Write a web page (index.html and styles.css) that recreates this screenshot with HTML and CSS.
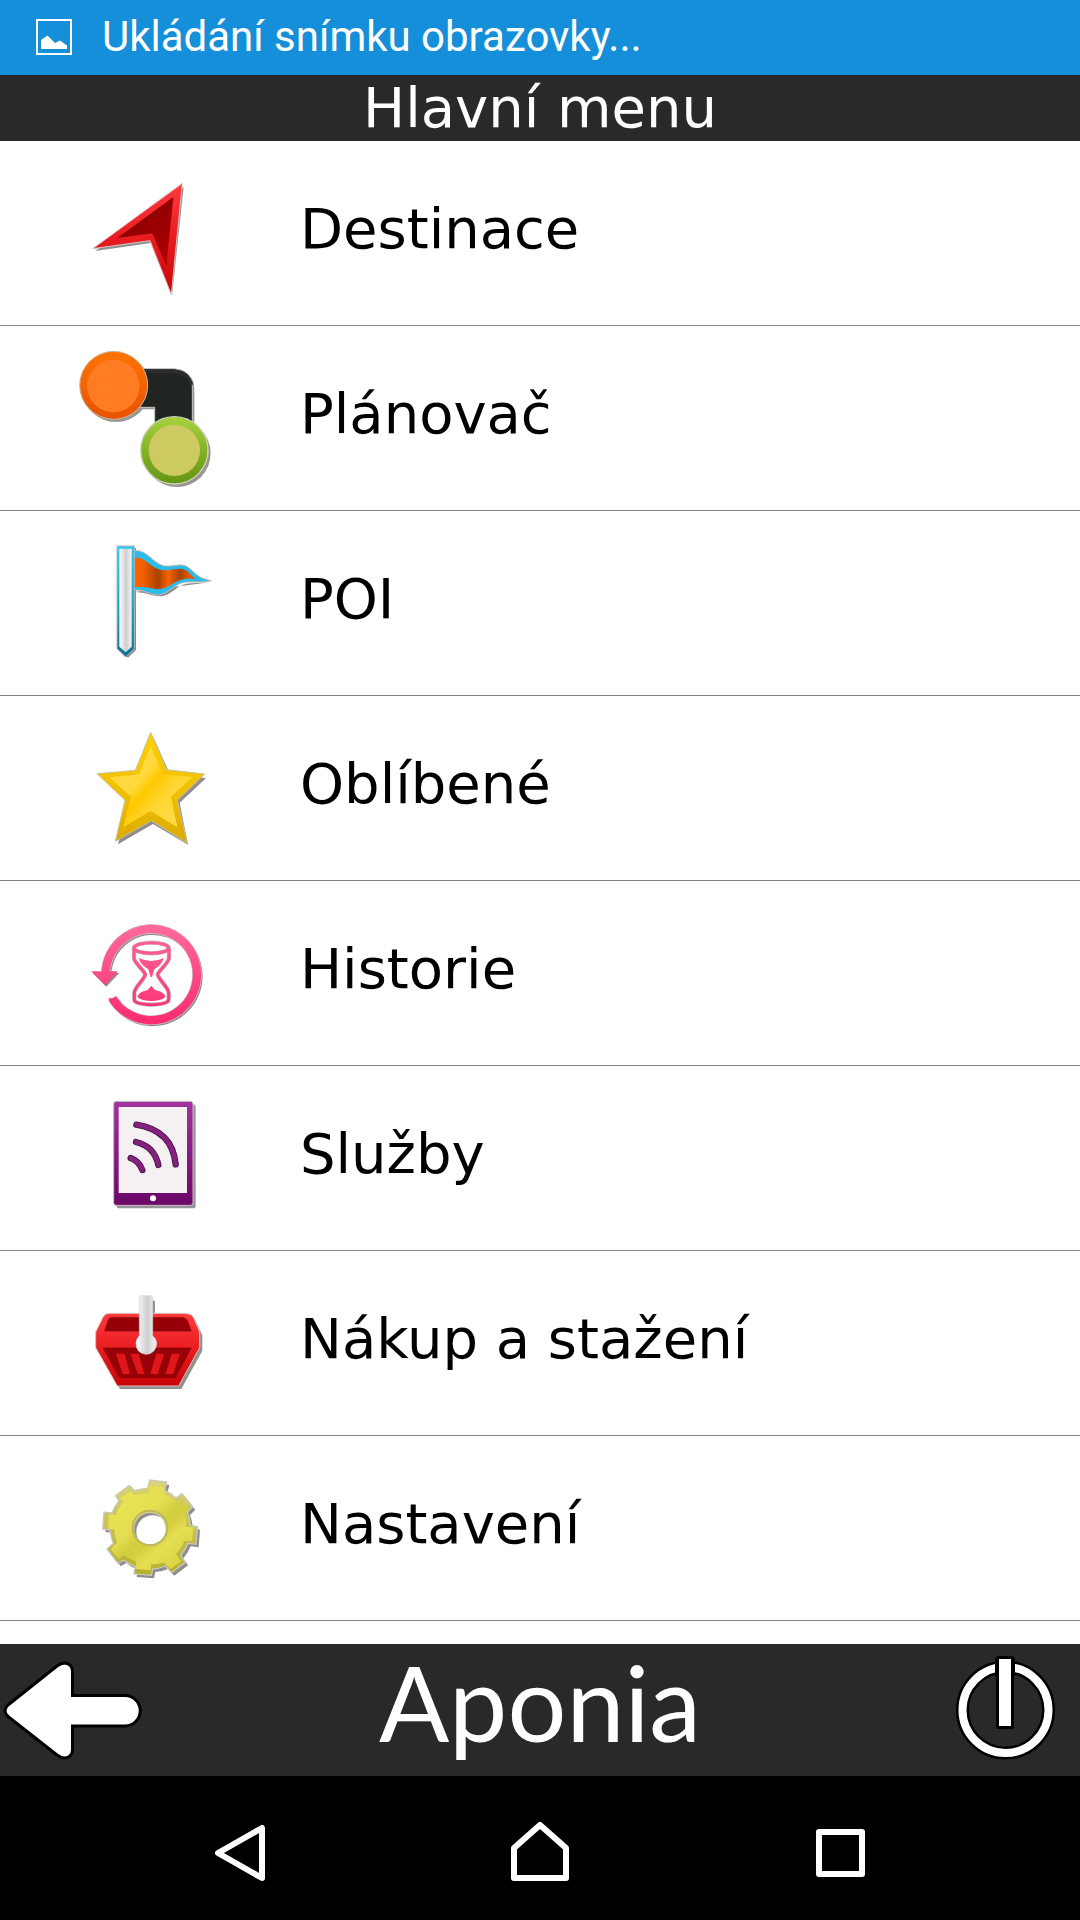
FILE: index.html
```html
<!DOCTYPE html>
<html lang="cs">
<head>
    <meta charset="UTF-8">
    <meta name="viewport" content="width=device-width, initial-scale=1">
    <title>Hlavní menu</title>
    <link rel="stylesheet" href="styles.css">
</head>
<body>
    <div class="status-bar">
        <svg class="status-icon" viewBox="0 0 36 36" aria-hidden="true">
            <rect x="1" y="1" width="34" height="34" fill="none" stroke="#fff" stroke-width="2"/>
            <path d="M5 30V21L11.500 16.500L19 24L24 21.500L31 26.500V30Z" fill="#fff"/>
        </svg>
        <span>Ukládání snímku obrazovky...</span>
    </div>
    <header class="title-bar">
        <h1>Hlavní menu</h1>
    </header>

    <main class="content">
        <ul class="menu">
            <li><a href="#destinace">
                <svg class="menu-icon" viewBox="0 -27 540 552" aria-hidden="true">
                    <defs>
                        <linearGradient id="redEdge" x1="0" y1="0" x2="0" y2="1"><stop offset="0" stop-color="#ff3a3d"/><stop offset=".5" stop-color="#e81c20"/><stop offset="1" stop-color="#c80406"/></linearGradient>
                        <linearGradient id="redIn" x1="0" y1="0" x2=".7" y2="1"><stop offset="0" stop-color="#7c0003"/><stop offset="1" stop-color="#ad0002"/></linearGradient>
                    </defs>
                    <path d="M106 303L371 111L336 436L272 279Z" fill="#92908e"/>
                    <path d="M98 296L367 100L334 434L270 272Z" fill="url(#redEdge)" stroke="#d8c4c2" stroke-width="3"/>
                    <path d="M172 264L340 141L319 348L277 250Z" fill="url(#redIn)"/>
                </svg>
                <span>Destinace</span>
            </a></li>
            <li><a href="#planovac">
                <svg class="menu-icon" viewBox="0 -12 540 552" aria-hidden="true">
                    <defs>
                        <linearGradient id="orangeRing" x1="0" y1="0" x2="0" y2="1"><stop offset="0" stop-color="#ff7400"/><stop offset="1" stop-color="#e85200"/></linearGradient>
                        <linearGradient id="greenRing" x1="0" y1="0" x2="0" y2="1"><stop offset="0" stop-color="#a5d23c"/><stop offset="1" stop-color="#649412"/></linearGradient>
                    </defs>
                    <circle cx="168" cy="173" r="103" fill="#999694"/>
                    <circle cx="351" cy="370" r="101" fill="#999694"/>
                    <path d="M240 122H350Q403 126 403 178V285H290V238H240Z" fill="#999694"/>
                    <path d="M240 116H344Q396 120 397 170V285H284V232H240Z" fill="#202522" stroke="#c9c6c3" stroke-width="3"/>
                    <path d="M250 125H340Q386 128 394 165" fill="none" stroke="#2b2b30" stroke-width="11"/>
                    <circle cx="161" cy="166" r="102" fill="url(#orangeRing)" stroke="#cdb7a8" stroke-width="3"/>
                    <circle cx="160" cy="168" r="79" fill="#ff7c22"/>
                    <circle cx="343" cy="361" r="101" fill="url(#greenRing)" stroke="#cbd3b4" stroke-width="4"/>
                    <circle cx="343" cy="361" r="77" fill="#cdca62"/>
                </svg>
                <span>Plánovač</span>
            </a></li>
            <li><a href="#poi">
                <svg class="menu-icon" viewBox="0 -27 540 552" aria-hidden="true">
                    <defs>
                        <linearGradient id="blueEdge" x1="0" y1="0" x2="0" y2="1"><stop offset="0" stop-color="#2cc6fa"/><stop offset=".45" stop-color="#1eabd5"/><stop offset="1" stop-color="#087094"/></linearGradient>
                        <linearGradient id="pole" x1="0" y1="0" x2="1" y2="0"><stop offset="0" stop-color="#fff"/><stop offset=".55" stop-color="#cecece"/><stop offset="1" stop-color="#f5f5f5"/></linearGradient>
                        <linearGradient id="cloth" x1="0" y1="0" x2="1" y2="0"><stop offset="0" stop-color="#ff6500"/><stop offset=".15" stop-color="#f36000"/><stop offset=".4" stop-color="#a84200"/><stop offset=".56" stop-color="#f96200"/><stop offset=".75" stop-color="#a64300"/><stop offset=".9" stop-color="#e85800"/></linearGradient>
                    </defs>
                    <path d="M176 84H228V390L204 413L176 390Z" fill="#8f8b8c"/>
                    <path d="M222 216C260 216 280 232 310 228C345 218 355 190 392 190L450 187Z" fill="#8f8b8c"/>
                    <path d="M220 92C260 86 276 128 310 137C335 143 365 125 386 143C406 158 414 176 455 182C420 190 387 182 364 189C340 198 315 230 286 224C262 219 245 208 220 210Z" fill="#2bbcee" stroke="#c4bab2" stroke-width="3"/>
                    <path d="M220 115C255 104 262 140 305 150C335 153 364 137 382 154L407 178C385 172 359 178 338 191C318 204 302 212 275 205C252 200 240 201 220 202Z" fill="url(#cloth)"/>
                    <path d="M171 78H223V386L197 411L171 386Z" fill="url(#blueEdge)" stroke="#b9b5b1" stroke-width="3"/>
                    <path d="M178 86H215V380L197 397L178 380Z" fill="url(#pole)"/>
                </svg>
                <span>POI</span>
            </a></li>
            <li><a href="#oblibene">
                <svg class="menu-icon" viewBox="0 -12 540 552" aria-hidden="true">
                    <defs>
                        <linearGradient id="starEdge" x1="0" y1="0" x2="0" y2="1"><stop offset="0" stop-color="#ffd000"/><stop offset=".6" stop-color="#eebd00"/><stop offset="1" stop-color="#d9a900"/></linearGradient>
                        <linearGradient id="starIn" x1=".1" y1=".15" x2=".85" y2=".8"><stop offset="0" stop-color="#ffd83e"/><stop offset=".38" stop-color="#ffd93e"/><stop offset=".52" stop-color="#ffc800"/><stop offset=".75" stop-color="#ffd633"/><stop offset="1" stop-color="#ffda45"/></linearGradient>
                    </defs>
                    <path d="M278 107L327 216L438 235L359 308L384 434L279 372L174 433L202 308Z" fill="#918d8e"/>
                    <path d="M272 97L320 209L434 222L352 301L382 429L274 362L166 424L195 301L111 221L226 211Z" fill="url(#starEdge)" stroke="#c9c39d" stroke-width="3"/>
                    <path d="M272 138L309 223L397 231L333 290L352 382L272 333L189 382L213 291L148 232L237 223Z" fill="url(#starIn)"/>
                </svg>
                <span>Oblíbené</span>
            </a></li>
            <li><a href="#historie">
                <svg class="menu-icon" viewBox="0 -27 540 552" aria-hidden="true">
                    <defs>
                        <linearGradient id="pink" gradientUnits="userSpaceOnUse" x1="0" y1="100" x2="0" y2="400"><stop offset="0" stop-color="#ff6c9c"/><stop offset="1" stop-color="#f92c6f"/></linearGradient>
                    </defs>
                    <g transform="translate(4 5)" fill="none" stroke="#8d8d8d" stroke-width="26">
                        <path d="M137 250A137 137 0 1 1 157 325"/>
                        <path d="M94 244H174L135 285Z" fill="#8d8d8d" stroke="none"/>
                    </g>
                    <path d="M137 250A137 137 0 1 1 157 325" fill="none" stroke="#d5c0c6" stroke-width="29"/>
                    <path d="M137 250A137 137 0 1 1 157 325" fill="none" stroke="url(#pink)" stroke-width="25"/>
                    <path d="M94 244H174L135 286Z" fill="url(#pink)"/>
                    <path d="M144 325H172L181 336L160 347Z" fill="url(#pink)"/>
                    <g fill="none" stroke="#c6b7bc" stroke-width="13">
                        <ellipse cx="274" cy="174" rx="52" ry="16"/>
                        <path d="M222 174V205C224 220 253 242 256 253C253 270 224 290 223 308V329Q224 343 274 344Q325 343 326 329V308C324 290 296 270 293 253C296 242 325 220 327 205V174"/>
                    </g>
                    <g fill="none" stroke="url(#pink)" stroke-width="9">
                        <ellipse cx="274" cy="174" rx="52" ry="16"/>
                        <path d="M222 174V205C224 220 253 242 256 253C253 270 224 290 223 308V329Q224 343 274 344Q325 343 326 329V308C324 290 296 270 293 253C296 242 325 220 327 205V174"/>
                    </g>
                    <path d="M236 204Q274 222 311 204Q307 223 283 238L276 261H272L265 238Q240 223 236 204Z" fill="url(#pink)"/>
                    <path d="M232 320Q239 304 263 300L274 287L285 300Q310 304 317 320Q302 333 274 333Q244 333 232 320Z" fill="url(#pink)"/>
                </svg>
                <span>Historie</span>
            </a></li>
            <li><a href="#sluzby">
                <svg class="menu-icon" viewBox="0 -12 540 552" aria-hidden="true">
                    <defs>
                        <linearGradient id="purple" x1="0" y1="0" x2="0" y2="1"><stop offset="0" stop-color="#a232a0"/><stop offset="1" stop-color="#690666"/></linearGradient>
                    </defs>
                    <rect x="170" y="103" width="237" height="312" rx="8" fill="#979497"/>
                    <rect x="161" y="94" width="238" height="312" rx="8" fill="url(#purple)" stroke="#c8bbc6" stroke-width="3"/>
                    <rect x="176" y="111" width="205" height="258" fill="#f5f0f1"/>
                    <g fill="none" stroke-linecap="round" stroke="#42153f" stroke-width="19">
                        <path d="M229 164Q337 181 347 283"/>
                        <path d="M228 216Q283 229 295 285"/>
                        <path d="M212 264Q237 273 247 300"/>
                    </g>
                    <g fill="none" stroke-linecap="round" stroke="#842080" stroke-width="14">
                        <path d="M229 164Q337 181 347 283"/>
                        <path d="M228 216Q283 229 295 285"/>
                        <path d="M212 264Q237 273 247 300"/>
                    </g>
                    <circle cx="279" cy="385" r="9" fill="#fff"/>
                </svg>
                <span>Služby</span>
            </a></li>
            <li><a href="#nakup">
                <svg class="menu-icon" viewBox="0 -27 540 552" aria-hidden="true">
                    <path d="M145 169H385Q400 170 407 183L427 225V272L364 387H180L116 275Z" fill="#929190"/>
                    <path d="M246 122H285V170H246Z" fill="#929190"/>
                    <path d="M147 160H378Q394 161 401 173L419 216V263L356 378H172L107 263V216L128 173Q135 160 147 160Z" fill="url(#redEdge)" stroke="#d5c8c4" stroke-width="3"/>
                    <path d="M154 173H368Q378 174 382 182L393 213H134L145 180Q148 174 154 173Z" fill="#960006" stroke="#7b0004" stroke-width="2"/>
                    <path d="M130 264H393L346 353H178Z" fill="#960006" stroke="#7b0004" stroke-width="2"/>
                    <path d="M168 281H194L210 342H188ZM211 281H236L253 342H234ZM289 281H313L293 342H271ZM335 281H360L339 342H317Z" fill="#df171b"/>
                    <path d="M243 107H273Q278 107 278 113V227Q290 237 290 251Q287 281 258 283Q229 280 228 251Q228 237 238 227V113Q238 107 243 107Z" fill="url(#pole)" stroke="#d5d2d2" stroke-width="2"/>
                </svg>
                <span>Nákup a stažení</span>
            </a></li>
            <li><a href="#nastaveni">
                <svg class="menu-icon" viewBox="0 -12 540 552" aria-hidden="true">
                    <defs>
                        <linearGradient id="gearEdge" gradientUnits="userSpaceOnUse" x1="0" y1="-145" x2="0" y2="145"><stop offset="0" stop-color="#d9d476"/><stop offset="1" stop-color="#b4ae2d"/></linearGradient>
                        <linearGradient id="gearIn" gradientUnits="userSpaceOnUse" x1="-80" y1="-90" x2="80" y2="90"><stop offset="0" stop-color="#e6e253"/><stop offset=".35" stop-color="#e3df50"/><stop offset=".52" stop-color="#d2cd3d"/><stop offset=".62" stop-color="#d4cf40"/><stop offset=".78" stop-color="#e4e052"/><stop offset="1" stop-color="#dcd748"/></linearGradient>
                        <path id="gearOuter" d="M-7 -121L-1 -146L50 -140L44 -115Q62 -107 78 -92L96 -105L128 -66L112 -50Q118 -35 121 -10L142 -6L138 47L114 44Q106 64 92 80L106 101L65 132L46 112Q28 120 8 121L4 140L-48 136L-45 113Q-64 107 -79 94L-96 104L-129 61L-110 44Q-118 24 -120 4L-142 1L-138 -49L-114 -47Q-107 -66 -93 -84L-103 -99L-62 -130L-46 -114Q-28 -120 -7 -121ZM0 -49A49 49 0 1 0 0 49A49 49 0 1 0 0 -49Z" fill-rule="evenodd"/>
                        <path id="gearInner" d="M-4 -108L-4 -128L43 -124L43 -103Q62 -94 84 -76L92 -84L116 -55L103 -43Q108 -28 108 -5L130 -4L127 37L104 36Q95 57 78 77L94 98L61 121L41 101Q25 108 4 107L2 125L-43 121L-42 98Q-63 92 -78 79L-94 92L-118 60L-99 42Q-106 23 -108 2L-126 0L-123 -42L-102 -42Q-97 -61 -80 -81L-91 -91L-59 -112L-44 -100Q-25 -107 -4 -108ZM0 -49A49 49 0 1 0 0 49A49 49 0 1 0 0 -49Z" fill-rule="evenodd"/>
                    </defs>
                    <use href="#gearOuter" transform="translate(278 275)" fill="#8f8d8e"/>
                    <use href="#gearOuter" transform="translate(270 266)" fill="url(#gearEdge)" stroke="#c9c8bb" stroke-width="4"/>
                    <use href="#gearInner" transform="translate(270 266)" fill="url(#gearIn)"/>
                    <circle cx="270" cy="264" r="52" fill="none" stroke="#bdb85a" stroke-width="6"/>
                </svg>
                <span>Nastavení</span>
            </a></li>
        </ul>
    </main>

    <footer class="app-bar">
        <button type="button" aria-label="Zpět">
            <svg viewBox="0 0 150 132">
                <path d="M72.500 51.500H125A15 15 0 0 1 125 82H72.500V106Q72 113 65 114Q61 114 57 111L8 72.500Q2 66.700 8 61L57 22Q61 19 65 19Q72 20 72.500 27Z" fill="#fff" stroke="#000" stroke-width="3"/>
            </svg>
        </button>
        <span class="brand">Aponia</span>
        <button type="button" aria-label="Ukončit">
            <svg viewBox="0 0 150 132">
                <circle cx="75.500" cy="66" r="43" fill="none" stroke="#000" stroke-width="13"/>
                <circle cx="75.500" cy="66" r="43" fill="none" stroke="#fff" stroke-width="8"/>
                <path d="M65 14H85V32H65Z" fill="#000"/>
                <rect x="67.500" y="13.500" width="15" height="70" rx="1" fill="#fff" stroke="#000" stroke-width="3"/>
            </svg>
        </button>
    </footer>
    <nav class="system-nav">
        <button type="button" aria-label="Zpět">
            <svg viewBox="0 0 60 72"><path d="M8 41L52 16V66Z"/></svg>
        </button>
        <button type="button" aria-label="Domů">
            <svg viewBox="0 0 60 72"><path d="M4 66V36L30 13L56 36V66Z"/></svg>
        </button>
        <button type="button" aria-label="Přehled">
            <svg viewBox="0 0 60 72"><path d="M9 20H52V62H9Z"/></svg>
        </button>
    </nav>
</body>
</html>
```
FILE: styles.css
```css
* { box-sizing: border-box; }
body { margin: 0; min-height: 100vh; display: flex; flex-direction: column; background-color: #fff; color: #000; font-family: "DejaVu Sans", sans-serif; }
svg { display: block; }
button { padding: 0; border: none; background: none; cursor: pointer; }

.status-bar { display: flex; align-items: center; gap: 30px; height: 75px; padding: 0 36px 2px; background-color: #168fda; color: #fff; font-family: Roboto, sans-serif; font-size: 42px; line-height: 48px; }
.status-icon { width: 36px; height: 36px; }

.title-bar { background-color: #2b282b; color: #fff; text-align: center; }
.title-bar h1 { margin: 0; font-size: 56px; font-weight: normal; line-height: 66px; }

.content { flex: 1; }
.menu { list-style: none; margin: 0; padding: 0; }
.menu a { display: flex; align-items: center; gap: 60px; padding-left: 60px; border-bottom: 1px solid #848484; color: #000; font-size: 56px; line-height: 66px; text-decoration: none; }
.menu-icon { width: 180px; height: 184px; flex: none; }
.menu span { padding-bottom: 8px; }

.app-bar { display: flex; align-items: center; justify-content: space-between; background-color: #2b282b; color: #fff; }
.app-bar svg { width: 150px; height: 132px; }
.brand { padding-bottom: 16px; font-family: Lato, sans-serif; font-size: 104px; font-weight: 400; line-height: 116px; }

.system-nav { display: grid; grid-template-columns: repeat(3, 1fr); padding: 36px 90px; background-color: #000; }
.system-nav button { display: flex; justify-content: center; }
.system-nav svg { width: 60px; height: 72px; fill: none; stroke: #fff; stroke-width: 6; stroke-linejoin: round; }
```
